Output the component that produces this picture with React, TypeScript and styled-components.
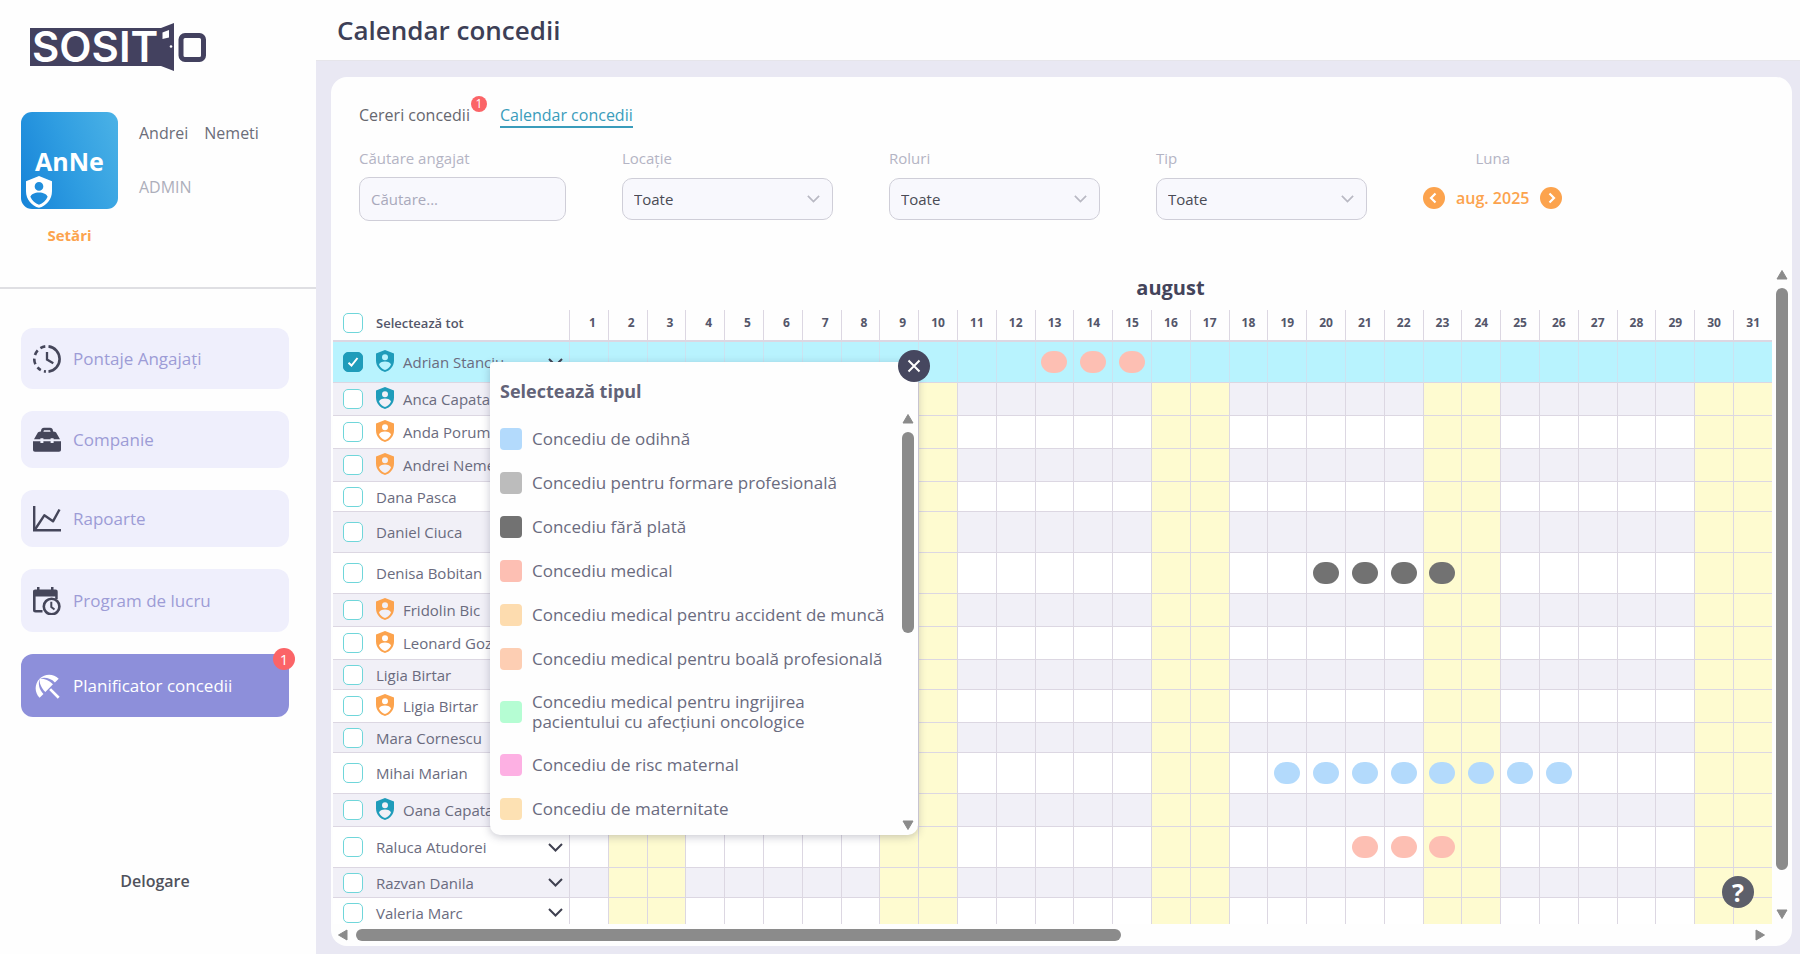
import React, { useState } from "react";
import styled, { createGlobalStyle, css } from "styled-components";

const color = {
  ink: "#43445b",
  text: "#6a6b7e",
  muted: "#b4b4c4",
  page: "#e9e8f3",
  line: "#dcd7e2",
  stripe: "#f1f0f7",
  weekend: "#fefbd0",
  selected: "#b8f3fe",
  teal: "#1f9cba",
  orange: "#fca34d",
  lilac: "#9d9cd6",
  active: "#8d8fda",
  alert: "#fb6467",
  scroll: "#8b8b8b",
};

const GlobalStyle = createGlobalStyle`
  *, *::before, *::after { box-sizing: border-box; }
  body {
    margin: 0;
    font-family: "Open Sans", "Noto Sans", sans-serif;
    font-size: 16px;
    color: ${color.ink};
    background: ${color.page};
  }
  button, input, select { font: inherit; color: inherit; }
`;

/* ---------- page frame ---------- */

const Page = styled.div`
  display: flex;
  height: 100vh;
`;

const Sidebar = styled.aside`
  flex: 0 0 316px;
  display: flex;
  flex-direction: column;
  background: #fefefe;
`;

const Content = styled.div`
  flex: 1;
  min-width: 0;
  display: flex;
  flex-direction: column;
`;

const TopBar = styled.header`
  height: 61px;
  padding: 0 21px;
  display: flex;
  align-items: center;
  background: #fefefe;
  border-bottom: 1px solid #e6e5ea;
`;

const PageTitle = styled.h1`
  margin: 0;
  font-size: 26px;
  line-height: 36px;
  font-weight: 600;
  color: #3d3f56;
`;

const Card = styled.main`
  flex: 1;
  min-height: 0;
  margin: 16px 8px 8px 15px;
  display: flex;
  flex-direction: column;
  position: relative;
  overflow: hidden;
  background: #fefefe;
  border-radius: 16px;
`;

/* ---------- sidebar ---------- */

const Brand = styled.div`
  padding: 22px 0 0 29px;
  height: 112px;
  svg { display: block; }
`;

const Profile = styled.section`
  padding: 0 21px;
  height: 177px;
  display: grid;
  grid-template-columns: 97px 1fr;
  grid-template-rows: 97px auto;
  column-gap: 21px;
  align-content: start;
  border-bottom: 2px solid #dfdfe3;
`;

const Avatar = styled.div`
  position: relative;
  display: flex;
  align-items: center;
  justify-content: center;
  border-radius: 11px;
  background: linear-gradient(70deg, #1683d8 0%, #2f9de1 50%, #4bb2e6 100%);
  color: #fff;
  font-size: 25px;
  font-weight: 700;
`;

const AvatarShield = styled.span`
  position: absolute;
  left: 5px;
  bottom: 1px;
  svg { display: block; }
`;

const Identity = styled.div`
  display: flex;
  flex-direction: column;
  gap: 32px;
  padding-top: 10px;
  line-height: 22px;
`;

const FullName = styled.div`
  display: flex;
  gap: 16px;
  color: #6b6d79;
`;

const Role = styled.div`
  font-size: 16px;
  color: #adafbb;
`;

const SettingsButton = styled.button`
  justify-self: center;
  margin-top: 15px;
  padding: 0;
  border: 0;
  background: none;
  font-size: 15px;
  line-height: 22px;
  font-weight: 700;
  color: ${color.orange};
  cursor: pointer;
`;

const Nav = styled.nav`
  padding: 39px 27px 0 21px;
  display: flex;
  flex-direction: column;
  gap: 22px;
`;

const NavLink = styled.a<{ $pad: number; $active?: boolean }>`
  position: relative;
  display: flex;
  align-items: center;
  gap: 12px;
  padding: ${(p) => p.$pad}px 12px;
  border-radius: 12px;
  background: ${(p) => (p.$active ? color.active : "#efeffc")};
  color: ${(p) => (p.$active ? "#fff" : color.lilac)};
  text-decoration: none;
  font-size: 17px;
  line-height: 29px;
  svg {
    flex: none;
    width: 28px;
    height: 28px;
    color: ${(p) => (p.$active ? "#fff" : "#45465a")};
  }
`;

const Badge = styled.span<{ $small?: boolean }>`
  position: absolute;
  top: ${(p) => (p.$small ? -8 : -6)}px;
  right: ${(p) => (p.$small ? -17 : -6)}px;
  width: ${(p) => (p.$small ? 16 : 22)}px;
  height: ${(p) => (p.$small ? 16 : 22)}px;
  border-radius: 50%;
  display: flex;
  align-items: center;
  justify-content: center;
  background: ${color.alert};
  color: #fff;
  font-size: ${(p) => (p.$small ? 12 : 15)}px;
  line-height: 1;
`;

const LogoutButton = styled.button`
  margin: auto auto 61px;
  padding: 0 6px 0 0;
  border: 0;
  background: none;
  line-height: 24px;
  font-weight: 600;
  font-size: 16px;
  color: #50525c;
  cursor: pointer;
`;

/* ---------- tabs and filters ---------- */

const Tabs = styled.nav`
  display: flex;
  gap: 30px;
  padding: 27px 28px 0;
`;

const Tab = styled.a<{ $active?: boolean }>`
  position: relative;
  line-height: 22px;
  text-decoration: none;
  color: ${(p) => (p.$active ? "#3a9cbb" : "#66676f")};
  border-bottom: 2px solid ${(p) => (p.$active ? "#3a9cbb" : "transparent")};
`;

const Filters = styled.form`
  display: flex;
  gap: 56px;
  height: 137px;
  padding: 20px 28px 0;
`;

const Field = styled.div<{ $center?: boolean }>`
  display: flex;
  flex-direction: column;
  gap: 9px;
  align-items: ${(p) => (p.$center ? "center" : "stretch")};
`;

const FieldLabel = styled.label`
  font-size: 15px;
  line-height: 20px;
  color: ${color.muted};
`;

const control = css`
  border: 1px solid #cfced8;
  border-radius: 10px;
  background: #f8f8fd;
  font-size: 15px;
  outline: none;
`;

const SearchInput = styled.input`
  ${control}
  width: 207px;
  height: 44px;
  padding: 0 11px;
  &::placeholder { color: #a9a9bb; opacity: 1; }
`;

const SelectBox = styled.div`
  position: relative;
  display: flex;
  align-items: center;
  height: 44px;
  svg {
    position: absolute;
    right: 13px;
    color: #b9b9c3;
    pointer-events: none;
  }
`;

const Select = styled.select`
  ${control}
  appearance: none;
  width: 211px;
  height: 42px;
  padding: 0 11px;
  color: #4a4b55;
`;

const MonthPicker = styled.div`
  display: flex;
  align-items: center;
  gap: 11px;
  height: 42px;
`;

const MonthValue = styled.output`
  font-size: 16px;
  font-weight: 600;
  color: ${color.orange};
`;

const RoundButton = styled.button`
  width: 22px;
  height: 22px;
  padding: 0;
  border: 0;
  border-radius: 50%;
  display: flex;
  align-items: center;
  justify-content: center;
  background: ${color.orange};
  color: #fff;
  cursor: pointer;
`;

/* ---------- calendar ---------- */

const Calendar = styled.section`
  flex: 1;
  min-height: 0;
  position: relative;
  display: grid;
  grid-template-columns: 1fr 20px;
  grid-template-rows: 1fr 22px;
`;

const Viewport = styled.div`
  min-height: 0;
  overflow: hidden;
  padding-left: 2px;
`;

const Table = styled.table`
  width: 100%;
  table-layout: fixed;
  border-collapse: separate;
  border-spacing: 0;
`;

const NameCol = styled.col`
  width: 236px;
`;

const MonthRow = styled.tr`
  height: 45px;
`;

const MonthHead = styled.th`
  padding: 0;
  font-size: 20px;
  line-height: 24px;
  font-weight: 700;
  color: #43445b;
`;

const DayHead = styled.th`
  height: 32px;
  padding: 0 12px 5px 0;
  text-align: right;
  font-size: 12px;
  font-weight: 700;
  color: #54566a;
  border-left: 1px solid ${color.line};
  border-bottom: 2px solid ${color.line};
`;

const AllHead = styled.th`
  padding: 0 0 5px;
  text-align: left;
  font-size: 13px;
  font-weight: 600;
  color: #54566a;
  border-bottom: 2px solid ${color.line};
`;

const NameLine = styled.div`
  display: flex;
  align-items: center;
  padding: 0 6px 0 10px;
`;

const NameLabel = styled.label`
  flex: 1;
  display: flex;
  align-items: center;
  gap: 9px;
  margin-left: 13px;
  svg { flex: none; margin-top: -3px; }
`;

const Check = styled.input`
  appearance: none;
  flex: none;
  width: 20px;
  height: 20px;
  margin: 0;
  border: 1px solid #6fd6da;
  border-radius: 5px;
  background: #fff;
  &:checked {
    border-color: ${color.teal};
    background: ${color.teal}
      url("data:image/svg+xml,%3Csvg xmlns='http://www.w3.org/2000/svg' viewBox='0 0 16 16'%3E%3Cpath d='M3.5 8.8l3 2.8L12.5 4' fill='none' stroke='%23fff' stroke-width='2'/%3E%3C/svg%3E")
      center / 16px no-repeat;
  }
`;

type RowKind = "plain" | "icon" | "tall";
const rowHeight: Record<RowKind, number> = { plain: 30, icon: 33, tall: 41 };

const Row = styled.tr<{ $kind: RowKind; $selected?: boolean }>`
  height: ${(p) => rowHeight[p.$kind]}px;
  background: #fff;
  &:nth-child(even) { background: ${color.stripe}; }
  ${(p) =>
    p.$selected &&
    css`
      && { background: ${color.selected}; }
      && td { background: transparent; border-left-color: #cbe3f1; }
    `}
`;

const NameCell = styled.th`
  padding: 0;
  text-align: left;
  font-size: 15px;
  line-height: 20px;
  font-weight: 400;
  color: ${color.text};
  border-bottom: 1px solid ${color.line};
`;

const DayCell = styled.td<{ $weekend: boolean }>`
  padding: 0;
  border-left: 1px solid ${color.line};
  border-bottom: 1px solid ${color.line};
  ${(p) => p.$weekend && css`background: ${color.weekend};`}
`;

const LeaveDot = styled.span<{ $fill: string }>`
  display: block;
  width: 26px;
  height: 22px;
  margin: 0 auto;
  border-radius: 12px / 11px;
  background: ${(p) => p.$fill};
`;

const ExpandButton = styled.button`
  padding: 0;
  border: 0;
  background: none;
  display: flex;
  color: #3f4050;
  cursor: pointer;
`;

/* ---------- scroll bars ---------- */

const BarTrack = styled.div<{ $axis: "x" | "y" }>`
  display: flex;
  flex-direction: ${(p) => (p.$axis === "x" ? "row" : "column")};
  align-items: center;
  gap: 7px;
  padding: ${(p) => (p.$axis === "x" ? "0 6px" : "4px 0")};
  color: ${color.scroll};
  svg { display: block; flex: none; }
`;

const BarRail = styled.div<{ $axis: "x" | "y" }>`
  flex: 1;
  min-height: 0;
  width: ${(p) => (p.$axis === "x" ? "auto" : "12px")};
  height: ${(p) => (p.$axis === "x" ? "12px" : "auto")};
`;

const BarThumb = styled.div<{ $axis: "x" | "y"; $part: number }>`
  width: ${(p) => (p.$axis === "x" ? `${p.$part}%` : "100%")};
  height: ${(p) => (p.$axis === "y" ? `${p.$part}%` : "100%")};
  border-radius: 6px;
  background: ${color.scroll};
`;

/* ---------- leave type popover ---------- */

const Popover = styled.div`
  position: absolute;
  top: 97px;
  left: 159px;
  width: 428px;
  height: 473px;
  padding: 16px 0 0 10px;
  display: flex;
  flex-direction: column;
  background: #fefefe;
  border-radius: 4px 4px 10px 10px;
  box-shadow: 0 2px 8px rgba(60, 60, 90, 0.28);
`;

const PopoverTitle = styled.h2`
  margin: 0;
  font-size: 18px;
  line-height: 26px;
  font-weight: 700;
  color: #626378;
`;

const PopoverBody = styled.div`
  flex: 1;
  min-height: 0;
  padding-top: 5px;
  display: grid;
  grid-template-columns: 1fr 20px;
`;

const TypeList = styled.ul`
  margin: 0;
  padding: 19px 0 0;
  list-style: none;
  display: flex;
  flex-direction: column;
  gap: 22px;
`;

const TypeButton = styled.button`
  width: 100%;
  min-height: 22px;
  padding: 0 11px 0 0;
  border: 0;
  background: none;
  display: flex;
  align-items: center;
  gap: 10px;
  text-align: left;
  font-size: 17px;
  line-height: 20px;
  color: ${color.text};
  cursor: pointer;
`;

const Swatch = styled.span<{ $fill: string }>`
  flex: none;
  width: 22px;
  height: 22px;
  border-radius: 4px;
  background: ${(p) => p.$fill};
`;

const CloseButton = styled.button`
  position: absolute;
  top: -12px;
  right: -12px;
  width: 32px;
  height: 32px;
  padding: 0;
  border: 0;
  border-radius: 50%;
  display: flex;
  align-items: center;
  justify-content: center;
  background: #46475f;
  color: #fff;
  cursor: pointer;
`;

const HelpButton = styled.button`
  position: absolute;
  right: 38px;
  bottom: 38px;
  width: 32px;
  height: 32px;
  padding: 0;
  border: 0;
  border-radius: 50%;
  background: #5d5f6a;
  color: #fff;
  font-size: 25px;
  line-height: 32px;
  font-weight: 700;
  cursor: pointer;
`;

/* ---------- drawings ---------- */

const Logo = () => (
  <svg width="180" height="50" viewBox="0 0 180 50" role="img" aria-label="SOSITO">
    <path d="M1 6H132L145 1V49L132 44H1Z" fill="#43415f" />
    <path d="M133.500 10.500L140 8V15.500L133.500 17Z" fill="#fff" />
    <circle cx="142" cy="24.500" r="1.300" fill="#fff" />
    <text x="3" y="40" fill="#fff" fontFamily="Inter, sans-serif" fontWeight="600" fontSize="42">
      SOSIT
    </text>
    <rect x="152" y="13.500" width="22.500" height="24" rx="4" fill="none" stroke="#43415f" strokeWidth="5" />
  </svg>
);

const Shield = ({ size, tone }: { size: number; tone: string }) => (
  <svg width={size} height={(size * 22) / 18} viewBox="0 0 18 22" aria-hidden="true">
    <path
      fill={tone}
      fillRule="evenodd"
      d="M9 0L18 3.600V10.500C18 16 14.200 20.600 9 22C3.800 20.600 0 16 0 10.500V3.600ZM9 4.200A3 3 0 1 0 9 10.200A3 3 0 1 0 9 4.200ZM9 11.400C6 11.400 3.600 12.600 3 14.400C4.200 17.200 6.400 19 9 19.900C11.600 19 13.800 17.200 15 14.400C14.400 12.600 12 11.400 9 11.400Z"
    />
  </svg>
);

const ClockIcon = () => (
  <svg viewBox="0 0 28 28" fill="none" stroke="currentColor" strokeWidth="2.600" aria-hidden="true">
    <path d="M15.500 1.400A12.700 12.700 0 0 1 15.500 26.600" />
    <path d="M12.300 1.400A12.700 12.700 0 0 0 7.400 3.100M4.700 5.400A12.700 12.700 0 0 0 2 10M1.300 13.600A12.700 12.700 0 0 0 2.400 19.300M4.500 22.400A12.700 12.700 0 0 0 7.800 25.100M10.900 26.300L12.900 26.650" />
    <path d="M14 7V14.600L20.300 18.200" strokeWidth="2.300" />
  </svg>
);

const ToolboxIcon = () => (
  <svg viewBox="0 0 28 28" fill="currentColor" aria-hidden="true">
    <path
      fillRule="evenodd"
      d="M8 5.500C8 3 9 1.800 11 1.800H17C19 1.800 20 3 20 5.500H20.500C22 5.500 23 6.200 23.700 7.400L27 13.200H20.600V12.200H17.600V13.200H10.400V12.200H7.400V13.200H1L4.300 7.400C5 6.200 6 5.500 7.500 5.500ZM10.500 5.700H17.500C17.500 4.700 17.200 4.200 16.500 4.200H11.500C10.800 4.200 10.500 4.700 10.500 5.700Z"
    />
    <path d="M0 15.200H7.400V17H10.400V15.200H17.600V17H20.600V15.200H28V23.500C28 25 27.300 25.700 26 25.700H2C.7 25.700 0 25 0 23.500Z" />
  </svg>
);

const ChartIcon = () => (
  <svg viewBox="0 0 28 28" fill="none" stroke="currentColor" strokeWidth="2.400" aria-hidden="true">
    <path d="M1.200 1V25.300H28" />
    <path d="M2 24.500L11.300 10.300L20 16.300L26.500 4.500" strokeLinejoin="round" />
  </svg>
);

const CalendarClockIcon = () => (
  <svg viewBox="0 0 28 28" aria-hidden="true">
    <path
      fill="currentColor"
      fillRule="evenodd"
      d="M4 0H6.500V2.500H18V0H20.500V2.500H22.500C24 2.500 24.700 3.200 24.700 4.700V12H22.200V9.500H2.600V23H9.500V25.500H2.500C.8 25.500 0 24.700 0 23V4.700C0 3.200.8 2.500 2.300 2.500H4Z"
    />
    <g fill="none" stroke="currentColor">
      <circle cx="18.600" cy="19.500" r="7.800" strokeWidth="2.600" />
      <path d="M18.300 14.800V20L21.500 22.500" strokeWidth="2" />
    </g>
  </svg>
);

const UmbrellaIcon = () => (
  <svg viewBox="1 1 21 21" fill="currentColor" aria-hidden="true">
    <path d="M13.127 14.560l1.430-1.430 6.440 6.443L19.570 21zm4.293-5.730l2.860-2.860c-3.950-3.950-10.350-3.960-14.300-.02 3.930-1.300 8.310-.25 11.440 2.880zM5.950 5.980c-3.940 3.950-3.930 10.350.02 14.300l2.860-2.860C5.700 14.290 4.650 9.910 5.950 5.980zm.02-.02l-.01.01c-.38 3.010 1.170 6.880 4.300 10.020l5.730-5.730c-3.130-3.130-7.010-4.680-10.020-4.300z" />
  </svg>
);

const Chevron = ({ width, thick }: { width: number; thick: number }) => (
  <svg width={width} height={width * 0.600} viewBox="0 0 15 9" fill="none" stroke="currentColor" strokeWidth={thick} aria-hidden="true">
    <path d="M1 1L7.500 7.500L14 1" />
  </svg>
);

const SideChevron = ({ d }: { d: string }) => (
  <svg width="12" height="12" viewBox="0 0 12 12" fill="none" stroke="currentColor" strokeWidth="2.200" aria-hidden="true">
    <path d={d} />
  </svg>
);

const arrowPath = {
  up: "M6 1.500L11 10H1Z",
  down: "M6 10.500L1 2H11Z",
  left: "M1.500 6L10 1V11Z",
  right: "M10.500 6L2 1V11Z",
};

const Arrow = ({ to }: { to: keyof typeof arrowPath }) => (
  <svg width="12" height="12" viewBox="0 0 12 12" aria-hidden="true">
    <path d={arrowPath[to]} fill="currentColor" stroke="currentColor" strokeLinejoin="round" />
  </svg>
);

const ScrollBar = ({ axis, part }: { axis: "x" | "y"; part: number }) => (
  <BarTrack $axis={axis} aria-hidden="true">
    <Arrow to={axis === "x" ? "left" : "up"} />
    <BarRail $axis={axis}>
      <BarThumb $axis={axis} $part={part} />
    </BarRail>
    <Arrow to={axis === "x" ? "right" : "down"} />
  </BarTrack>
);

/* ---------- data ---------- */

const rest = "#b3dafc";
const unpaid = "#727272";
const medical = "#fdbfb3";

type Employee = {
  name: string;
  shield?: string;
  tall?: boolean;
  leave?: { from: number; to: number; fill: string };
};

const employees: Employee[] = [
  { name: "Adrian Stanciu", shield: color.teal, leave: { from: 13, to: 15, fill: medical } },
  { name: "Anca Capatana", shield: color.teal },
  { name: "Anda Porumb", shield: color.orange },
  { name: "Andrei Nemeti", shield: color.orange },
  { name: "Dana Pasca" },
  { name: "Daniel Ciuca", tall: true },
  { name: "Denisa Bobitan", leave: { from: 20, to: 23, fill: unpaid } },
  { name: "Fridolin Bic", shield: color.orange },
  { name: "Leonard Goz", shield: color.orange },
  { name: "Ligia Birtar" },
  { name: "Ligia Birtar", shield: color.orange },
  { name: "Mara Cornescu" },
  { name: "Mihai Marian", leave: { from: 19, to: 26, fill: rest } },
  { name: "Oana Capatana", shield: color.teal },
  { name: "Raluca Atudorei", leave: { from: 21, to: 23, fill: medical } },
  { name: "Razvan Danila" },
  { name: "Valeria Marc" },
];

const leaveTypes = [
  { name: "Concediu de odihnă", fill: rest },
  { name: "Concediu pentru formare profesională", fill: "#bcbcbc" },
  { name: "Concediu fără plată", fill: unpaid },
  { name: "Concediu medical", fill: medical },
  { name: "Concediu medical pentru accident de muncă", fill: "#fddcaf" },
  { name: "Concediu medical pentru boală profesională", fill: "#fdceb3" },
  { name: "Concediu medical pentru ingrijirea pacientului cu afecțiuni oncologice", fill: "#b5fdd3" },
  { name: "Concediu de risc maternal", fill: "#fdb0e3" },
  { name: "Concediu de maternitate", fill: "#fde1b3" },
];

const navItems = [
  { label: "Pontaje Angajați", icon: <ClockIcon />, pad: 16 },
  { label: "Companie", icon: <ToolboxIcon />, pad: 14 },
  { label: "Rapoarte", icon: <ChartIcon />, pad: 14 },
  { label: "Program de lucru", icon: <CalendarClockIcon />, pad: 17 },
  { label: "Planificator concedii", icon: <UmbrellaIcon />, pad: 17, active: true, count: 1 },
];

const days = Array.from({ length: 31 }, (_, i) => i + 1);
/* 1 August 2025 is a Friday. */
const isWeekend = (day: number) => day % 7 === 2 || day % 7 === 3;

const rowKind = (e: Employee): RowKind => (e.leave || e.tall ? "tall" : e.shield ? "icon" : "plain");

/* ---------- view ---------- */

const SelectField = ({ id, label }: { id: string; label: string }) => (
  <Field>
    <FieldLabel htmlFor={id}>{label}</FieldLabel>
    <SelectBox>
      <Select id={id}>
        <option>Toate</option>
      </Select>
      <Chevron width={13} thick={2} />
    </SelectBox>
  </Field>
);

const EmployeeRow = ({ employee, index }: { employee: Employee; index: number }) => {
  const [checked, setChecked] = useState(index === 0);
  const { name, shield, leave } = employee;
  const id = `employee-${index}`;
  return (
    <Row $kind={rowKind(employee)} $selected={checked}>
      <NameCell scope="row">
        <NameLine>
          <Check id={id} type="checkbox" checked={checked} onChange={() => setChecked(!checked)} />
          <NameLabel htmlFor={id}>
            {shield && <Shield size={18} tone={shield} />}
            {name}
          </NameLabel>
          <ExpandButton type="button" aria-label={`Detalii ${name}`}>
            <Chevron width={15} thick={2} />
          </ExpandButton>
        </NameLine>
      </NameCell>
      {days.map((day) => (
        <DayCell key={day} $weekend={isWeekend(day)}>
          {leave && day >= leave.from && day <= leave.to && <LeaveDot $fill={leave.fill} />}
        </DayCell>
      ))}
    </Row>
  );
};

export default function App() {
  const [open, setOpen] = useState(true);
  return (
    <>
      <GlobalStyle />
      <Page>
        <Sidebar>
          <Brand>
            <Logo />
          </Brand>
          <Profile>
            <Avatar>
              AnNe
              <AvatarShield>
                <Shield size={26} tone="#fff" />
              </AvatarShield>
            </Avatar>
            <Identity>
              <FullName>
                <span>Andrei</span>
                <span>Nemeti</span>
              </FullName>
              <Role>ADMIN</Role>
            </Identity>
            <SettingsButton type="button">Setări</SettingsButton>
          </Profile>
          <Nav>
            {navItems.map((item) => (
              <NavLink key={item.label} href="#" $pad={item.pad} $active={item.active}>
                {item.icon}
                {item.label}
                {item.count && <Badge>{item.count}</Badge>}
              </NavLink>
            ))}
          </Nav>
          <LogoutButton type="button">Delogare</LogoutButton>
        </Sidebar>
        <Content>
          <TopBar>
            <PageTitle>Calendar concedii</PageTitle>
          </TopBar>
          <Card>
            <Tabs>
              <Tab href="#">
                Cereri concedii
                <Badge $small>1</Badge>
              </Tab>
              <Tab href="#" $active>
                Calendar concedii
              </Tab>
            </Tabs>
            <Filters>
              <Field>
                <FieldLabel htmlFor="search">Căutare angajat</FieldLabel>
                <SearchInput id="search" type="text" placeholder="Căutare..." />
              </Field>
              <SelectField id="location" label="Locație" />
              <SelectField id="roles" label="Roluri" />
              <SelectField id="type" label="Tip" />
              <Field $center>
                <FieldLabel htmlFor="month">Luna</FieldLabel>
                <MonthPicker>
                  <RoundButton type="button" aria-label="Luna anterioară">
                    <SideChevron d="M7.500 1.500L3 6L7.500 10.500" />
                  </RoundButton>
                  <MonthValue id="month">aug. 2025</MonthValue>
                  <RoundButton type="button" aria-label="Luna următoare">
                    <SideChevron d="M4.500 1.500L9 6L4.500 10.500" />
                  </RoundButton>
                </MonthPicker>
              </Field>
            </Filters>
            <Calendar>
              <Viewport>
                <Table>
                  <colgroup>
                    <NameCol />
                    <col span={31} />
                  </colgroup>
                  <thead>
                    <MonthRow>
                      <td />
                      <MonthHead colSpan={31}>august</MonthHead>
                    </MonthRow>
                    <tr>
                      <AllHead scope="col">
                        <NameLine>
                          <Check id="all" type="checkbox" />
                          <NameLabel htmlFor="all">Selectează tot</NameLabel>
                        </NameLine>
                      </AllHead>
                      {days.map((day) => (
                        <DayHead key={day} scope="col">
                          {day}
                        </DayHead>
                      ))}
                    </tr>
                  </thead>
                  <tbody>
                    {employees.map((employee, index) => (
                      <EmployeeRow key={index} employee={employee} index={index} />
                    ))}
                  </tbody>
                </Table>
              </Viewport>
              <ScrollBar axis="y" part={95} />
              <ScrollBar axis="x" part={55} />
              {open && (
                <Popover role="dialog" aria-label="Selectează tipul">
                  <CloseButton type="button" aria-label="Închide" onClick={() => setOpen(false)}>
                    <svg width="14" height="14" viewBox="0 0 14 14" stroke="currentColor" strokeWidth="2" aria-hidden="true">
                      <path d="M1.500 1.500L12.500 12.500M12.500 1.500L1.500 12.500" />
                    </svg>
                  </CloseButton>
                  <PopoverTitle>Selectează tipul</PopoverTitle>
                  <PopoverBody>
                    <TypeList>
                      {leaveTypes.map((type) => (
                        <li key={type.name}>
                          <TypeButton type="button">
                            <Swatch $fill={type.fill} />
                            {type.name}
                          </TypeButton>
                        </li>
                      ))}
                    </TypeList>
                    <ScrollBar axis="y" part={53} />
                  </PopoverBody>
                </Popover>
              )}
            </Calendar>
            <HelpButton type="button" aria-label="Ajutor">
              ?
            </HelpButton>
          </Card>
        </Content>
      </Page>
    </>
  );
}
